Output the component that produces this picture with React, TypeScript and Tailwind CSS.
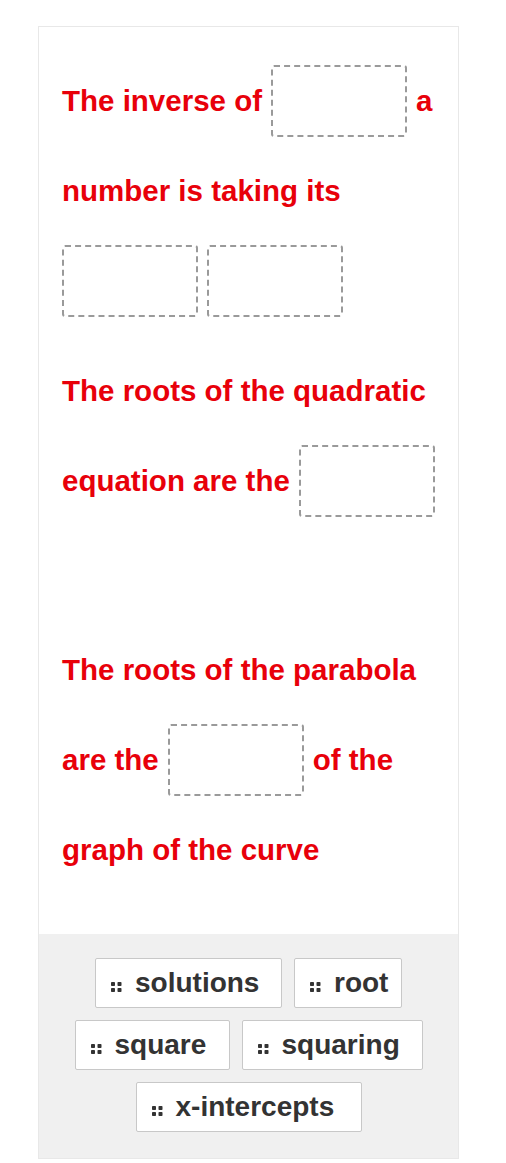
import React from 'react';

type Part = string | { blank: true };

const blank: Part = { blank: true };

// each sentence is split into the lines as they wrap on the card
const sentences: { mt: string; lines: Part[][] }[] = [
  {
    mt: 'mt-0',
    lines: [['The inverse of', blank, 'a'], ['number is taking its'], [blank, blank]],
  },
  {
    mt: 'mt-[20px]',
    lines: [['The roots of the quadratic'], ['equation are the', blank]],
  },
  {
    mt: 'mt-[99px]',
    lines: [['The roots of the parabola'], ['are the', blank, 'of the'], ['graph of the curve']],
  },
];

const choices = [
  { label: 'solutions', w: 'w-[187px]' },
  { label: 'root', w: 'w-[108px]' },
  { label: 'square', w: 'w-[155px]' },
  { label: 'squaring', w: 'w-[181px]' },
  { label: 'x-intercepts', w: 'w-[226px]' },
];

function Blank() {
  return <span className="inline-block w-[136px] h-[72px] shrink-0 border-2 border-dashed border-[#9a9a9a] rounded-[3px] bg-white" />;
}

function Grip() {
  return (
    <svg width="11" height="10" viewBox="0 0 11 10" className="mt-[8px] mr-[13px] shrink-0" fill="#333">
      <rect x="0" y="0" width="4" height="4" rx="0.8" />
      <rect x="6.5" y="0" width="4" height="4" rx="0.8" />
      <rect x="0" y="6" width="4" height="4" rx="0.8" />
      <rect x="6.5" y="6" width="4" height="4" rx="0.8" />
    </svg>
  );
}

export default function App() {
  return (
    <div className="min-h-screen bg-white pt-[26px]" style={{ fontFamily: '"Liberation Sans", Arial, sans-serif' }}>
      <div className="ml-[38px] w-[421px] border border-[#e8e8e8] bg-white">
        {/* Sentences with drop targets */}
        <div className="pl-[23px] pr-2 pt-[29px] pb-[39px]">
          {sentences.map((s, i) => (
            <div key={i} className={s.mt}>
              {s.lines.map((line, j) => (
                <div key={j} className="flex items-center gap-[9px] h-[90px] text-[29.5px] font-bold text-[#e8000a] leading-none whitespace-nowrap">
                  {line.map((p, k) =>
                    typeof p === 'string' ? <span key={k}>{p}</span> : <Blank key={k} />
                  )}
                </div>
              ))}
            </div>
          ))}
        </div>

        {/* Answer bank */}
        <div className="bg-[#f0f0f0] px-2 pt-[24px] pb-[26px] flex flex-wrap justify-center gap-x-3 gap-y-[12px]">
          {choices.map((c) => (
            <div
              key={c.label}
              className={`${c.w} h-[50px] flex items-center pl-[15px] bg-white border border-[#c8c8c8] rounded-[2px] text-[#333] font-bold`}
            >
              <Grip />
              <span className="text-[28px] leading-none">{c.label}</span>
            </div>
          ))}
        </div>
      </div>
    </div>
  );
}
